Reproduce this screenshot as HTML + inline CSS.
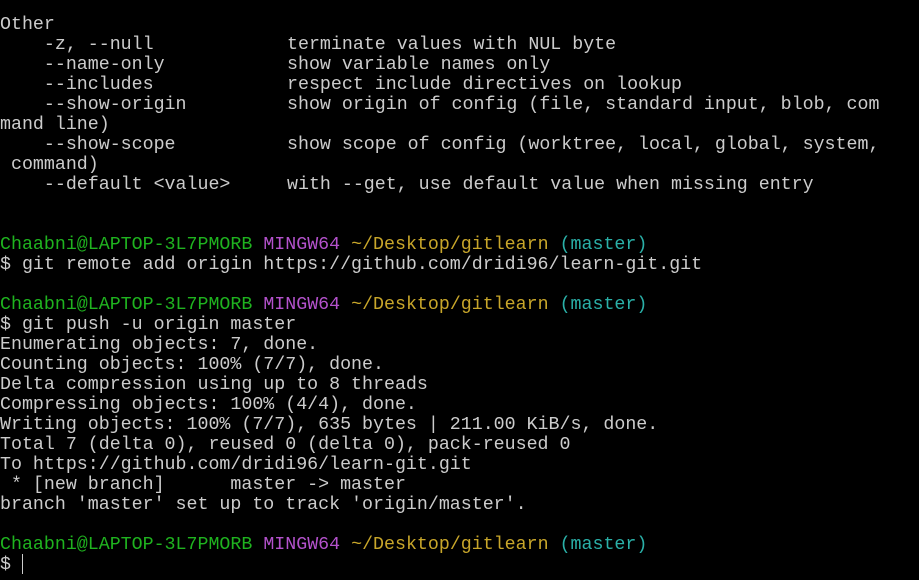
<!DOCTYPE html>
<html><head><meta charset="utf-8"><style>
html,body{margin:0;padding:0;background:#000;width:919px;height:580px;overflow:hidden}
.t{position:relative;font-family:"Liberation Mono",monospace;font-size:18.3px;color:#cccccc;}
.l{position:absolute;left:0;height:20px;line-height:20px;white-space:pre;}
.c{position:absolute;left:287px;top:0;white-space:pre}
.g{color:#1fb31f}.p{color:#b452cc}.y{color:#c8a62a}.cy{color:#2ab0a8}
.cur{position:absolute;left:22px;top:554px;width:1px;height:20px;background:#ccc}
</style></head><body><div class="t">
<div class="l" style="top:15px">Other</div>
<div class="l" style="top:35px">    -z, --null<span class="c">terminate values with NUL byte</span></div>
<div class="l" style="top:55px">    --name-only<span class="c">show variable names only</span></div>
<div class="l" style="top:75px">    --includes<span class="c">respect include directives on lookup</span></div>
<div class="l" style="top:95px">    --show-origin<span class="c">show origin of config (file, standard input, blob, com</span></div>
<div class="l" style="top:115px">mand line)</div>
<div class="l" style="top:135px">    --show-scope<span class="c">show scope of config (worktree, local, global, system,</span></div>
<div class="l" style="top:155px"> command)</div>
<div class="l" style="top:175px">    --default &lt;value&gt;<span class="c">with --get, use default value when missing entry</span></div>
<div class="l" style="top:235px"><span class="g">Chaabni@LAPTOP-3L7PMORB</span> <span class="p">MINGW64</span> <span class="y">~/Desktop/gitlearn</span> <span class="cy">(master)</span></div>
<div class="l" style="top:255px">$ git remote add origin https://github.com/dridi96/learn-git.git</div>
<div class="l" style="top:295px"><span class="g">Chaabni@LAPTOP-3L7PMORB</span> <span class="p">MINGW64</span> <span class="y">~/Desktop/gitlearn</span> <span class="cy">(master)</span></div>
<div class="l" style="top:315px">$ git push -u origin master</div>
<div class="l" style="top:335px">Enumerating objects: 7, done.</div>
<div class="l" style="top:355px">Counting objects: 100% (7/7), done.</div>
<div class="l" style="top:375px">Delta compression using up to 8 threads</div>
<div class="l" style="top:395px">Compressing objects: 100% (4/4), done.</div>
<div class="l" style="top:415px">Writing objects: 100% (7/7), 635 bytes | 211.00 KiB/s, done.</div>
<div class="l" style="top:435px">Total 7 (delta 0), reused 0 (delta 0), pack-reused 0</div>
<div class="l" style="top:455px">To https://github.com/dridi96/learn-git.git</div>
<div class="l" style="top:475px"> * [new branch]      master -&gt; master</div>
<div class="l" style="top:495px">branch 'master' set up to track 'origin/master'.</div>
<div class="l" style="top:535px"><span class="g">Chaabni@LAPTOP-3L7PMORB</span> <span class="p">MINGW64</span> <span class="y">~/Desktop/gitlearn</span> <span class="cy">(master)</span></div>
<div class="l" style="top:555px">$</div>
<div class="cur"></div>
</div></body></html>
